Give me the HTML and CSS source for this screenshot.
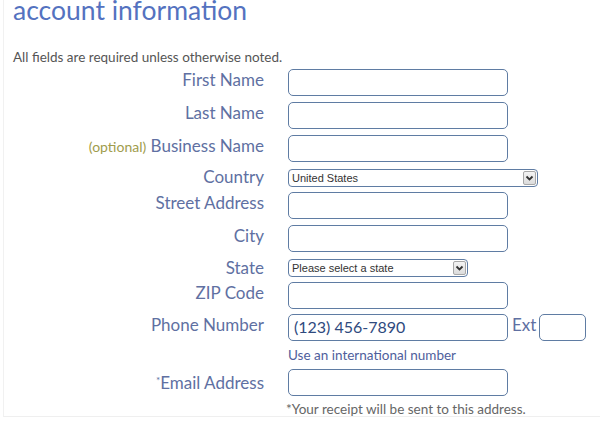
FILE: index.html
```html
<!DOCTYPE html>
<html>
<head>
<meta charset="utf-8">
<link rel="stylesheet" href="styles.css">
</head>
<body>
<div class="page">
  <h1 class="title">account information</h1>
  <p class="intro">All fields are required unless otherwise noted.</p>
  <div class="form">
    <div class="row r1">
      <div class="label">First Name</div>
      <div class="input"></div>
    </div>
    <div class="row r2">
      <div class="label">Last Name</div>
      <div class="input"></div>
    </div>
    <div class="row r3">
      <div class="label"><span class="optional">(optional)</span> Business Name</div>
      <div class="input"></div>
    </div>
    <div class="row r4">
      <div class="label sel-label">Country</div>
      <div class="select wide"><span class="sel-text">United States</span><span class="arrow"><svg width="9" height="7" viewBox="0 0 9 7"><path d="M1.5 1.5 L4.5 4.5 L7.5 1.5" fill="none" stroke="#333" stroke-width="1.8"/></svg></span></div>
    </div>
    <div class="row r5">
      <div class="label">Street Address</div>
      <div class="input"></div>
    </div>
    <div class="row r6">
      <div class="label">City</div>
      <div class="input"></div>
    </div>
    <div class="row r7">
      <div class="label sel-label2">State</div>
      <div class="select narrow"><span class="sel-text">Please select a state</span><span class="arrow"><svg width="9" height="7" viewBox="0 0 9 7"><path d="M1.5 1.5 L4.5 4.5 L7.5 1.5" fill="none" stroke="#333" stroke-width="1.8"/></svg></span></div>
    </div>
    <div class="row r8">
      <div class="label">ZIP Code</div>
      <div class="input"></div>
    </div>
    <div class="row r9">
      <div class="label">Phone Number</div>
      <div class="input phone">(123) 456-7890</div>
      <div class="ext-label">Ext</div>
      <div class="input ext"></div>
    </div>
    <div class="hint">Use an international number</div>
    <div class="row r10">
      <div class="label"><span class="star">*</span>Email Address</div>
      <div class="input"></div>
    </div>
    <div class="note">*Your receipt will be sent to this address.</div>
  </div>
</div>
</body>
</html>
```
FILE: styles.css
```css
html, body {
  margin: 0;
  padding: 0;
  background: #ffffff;
}
body {
  font-family: Lato, "Open Sans", sans-serif;
  width: 600px;
  height: 422px;
  overflow: hidden;
}
.page {
  position: relative;
  height: 419px;
  margin-left: 3px;
  border-left: 1px solid #f1f1f1;
  border-bottom: 1px solid #efefef;
  box-sizing: border-box;
  padding-left: 9px;
}
.title {
  margin: -2px 0 0 0;
  font-size: 26.5px;
  line-height: 24px;
  font-weight: 400;
  color: #5472c0;
}
.intro {
  margin: 27px 0 0 0;
  font-size: 13.5px;
  line-height: 16px;
  color: #555555;
  font-weight: 400;
}
.form {
  margin-top: 4px;
  margin-left: -12px;
}
.row {
  display: flex;
  align-items: flex-start;
}
.label {
  width: 263px;
  padding-right: 24px;
  text-align: right;
  font-size: 17px;
  line-height: 20px;
  font-weight: 400;
  color: #6070a2;
  margin-top: 1px;
  white-space: nowrap;
}
.sel-label { margin-top: -2px; }
.sel-label2 { margin-top: -1px; }
.optional {
  font-size: 14px;
  color: #a09c4c;
}
.star {
  font-size: 10px;
  vertical-align: 5px;
}
.input {
  width: 220px;
  height: 27px;
  box-sizing: border-box;
  border: 1.5px solid #5f7ca3;
  border-radius: 5px;
  background: #fff;
}
.phone {
  font-size: 16px;
  line-height: 24px;
  padding-left: 5px;
  color: #2f4a7e;
}
.ext-label {
  margin-left: 4px;
  font-size: 17px;
  line-height: 20px;
  font-weight: 400;
  color: #6070a2;
  margin-top: 1px;
}
.ext {
  width: 47px;
  margin-left: 3px;
}
.select {
  height: 18px;
  box-sizing: border-box;
  border: 1.5px solid #5f7ca3;
  border-radius: 4px;
  display: flex;
  align-items: center;
  background: #fff;
  font-family: "Liberation Sans", Arial, sans-serif;
  font-size: 11px;
  color: #333;
}
.wide { width: 250px; }
.narrow { width: 180px; }
.sel-text {
  flex: 1;
  padding-left: 3px;
  line-height: 14px;
}
.arrow {
  width: 13px;
  height: 14px;
  margin-right: 1px;
  box-sizing: border-box;
  border: 1px solid #a8a8a8;
  border-radius: 2px;
  background: linear-gradient(#f4f4f4, #dcdcdc);
  display: flex;
  align-items: center;
  justify-content: center;
}
.r2, .r3, .r6, .r10 { margin-top: 6px; }
.r4, .r7 { margin-top: 7px; }
.r5, .r9 { margin-top: 5px; }
.r8 { margin-top: 4px; }
.hint {
  margin: 6px 0 0 287px;
  font-size: 13.5px;
  line-height: 16px;
  color: #4f5e9c;
}
.note {
  margin: 5px 0 0 285px;
  font-size: 13.5px;
  line-height: 16px;
  font-weight: 400;
  color: #666666;
}
```
